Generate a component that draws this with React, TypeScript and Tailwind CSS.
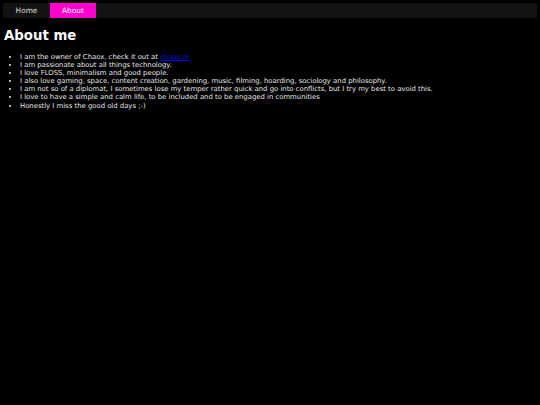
const items = [
  "I am passionate about all things technology.",
  "I love FLOSS, minimalism and good people.",
  "I also love gaming, space, content creation, gardening, music, filming, hoarding, sociology and philosophy.",
  "I am not so of a diplomat, I sometimes lose my temper rather quick and go into conflicts, but I try my best to avoid this.",
  "I love to have a simple and calm life, to be included and to be engaged in communities",
  "Honestly I miss the good old days ;-)",
]

export default function App() {
  return (
    <div
      className="min-h-[405px] bg-black p-[3px] text-[#eeeeee]"
      style={{ fontFamily: '"DejaVu Sans", sans-serif' }}
    >
      <nav className="flex h-[15px] items-stretch bg-[#131313] text-[7.4px]">
        <a className="flex w-[47px] items-center justify-center text-[#dddddd]">Home</a>
        <a className="flex w-[46px] items-center justify-center bg-[#f0c] text-white">About</a>
      </nav>
      <h1 className="mt-[10px] pl-px text-[13.3px] font-bold leading-[16px] text-white">About me</h1>
      <ul className="mt-[9px] list-disc pl-[17px] text-[6.87px] leading-[8.1px] text-[#e6e6e6]">
        <li>
          I am the owner of Chaox, check it out at{" "}
          <a className="text-[#0000ee] underline">chaox.re</a>
        </li>
        {items.map((t) => (
          <li key={t}>{t}</li>
        ))}
      </ul>
    </div>
  )
}
